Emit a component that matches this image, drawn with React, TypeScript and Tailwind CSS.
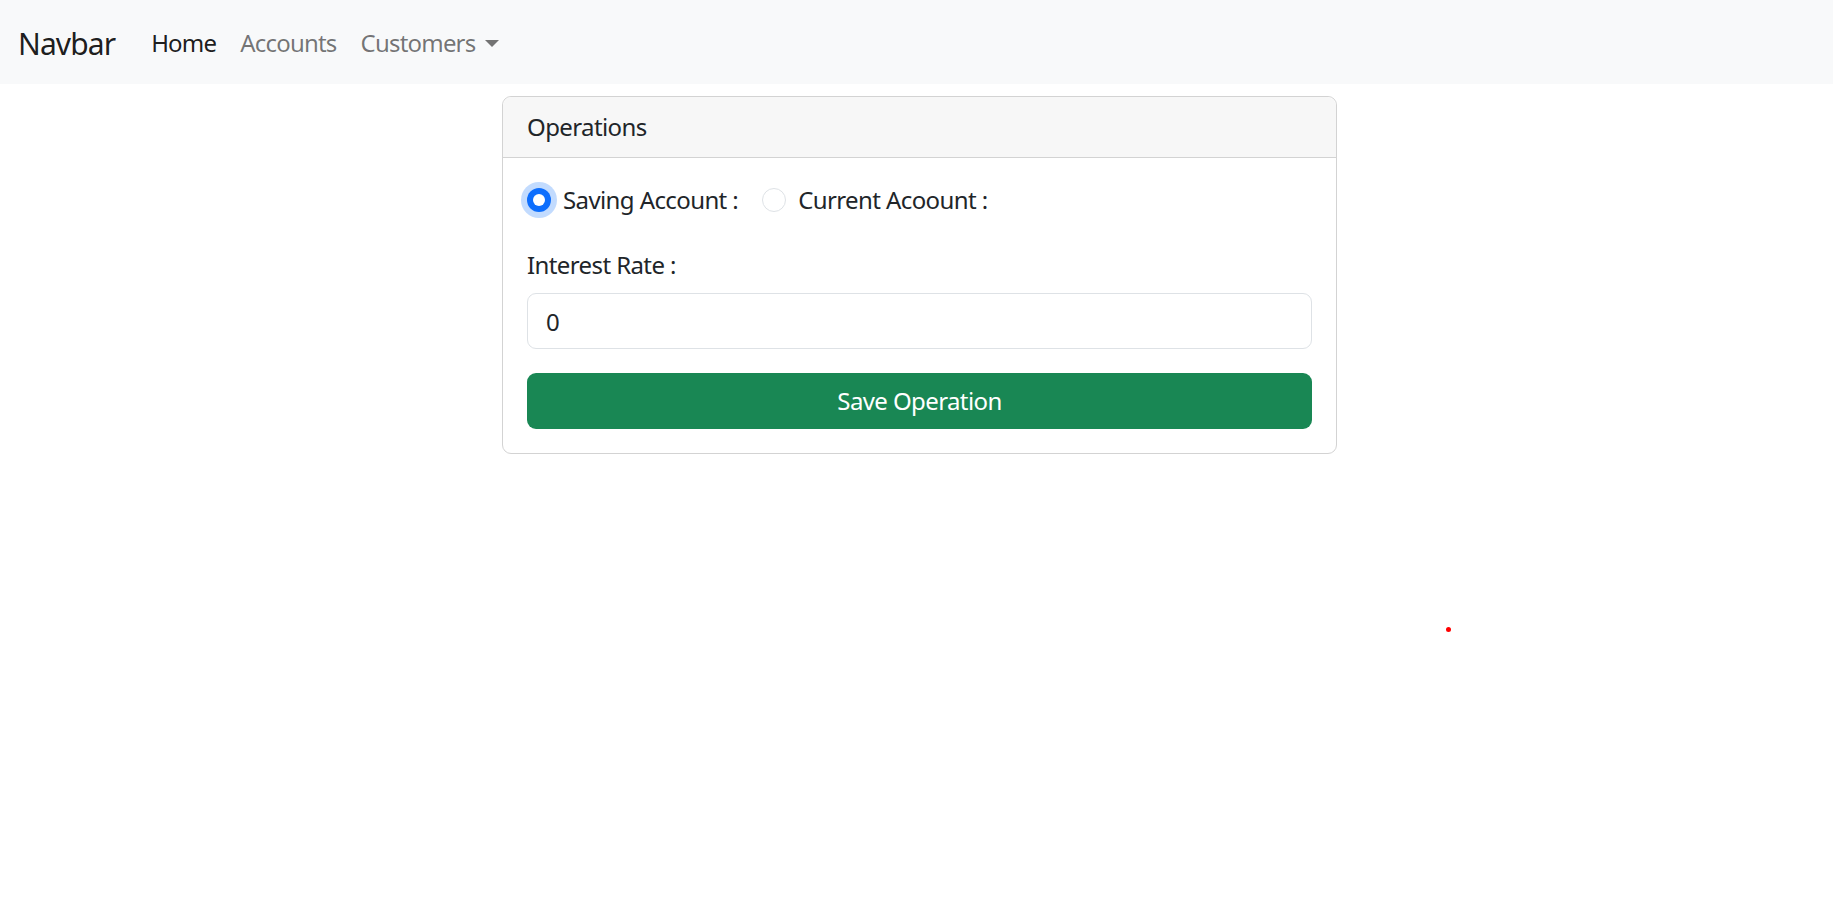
import { useState } from "react"

function Radio({ checked, label, onClick }: { checked: boolean; label: string; onClick: () => void }) {
  return (
    <label className="flex items-center mr-[24px] cursor-pointer" onClick={onClick}>
      {checked ? (
        <span className="w-[24px] h-[24px] rounded-full bg-[#0d6efd] flex items-center justify-center shadow-[0_0_0_6px_rgba(13,110,253,0.25)]">
          <span className="w-[12px] h-[12px] rounded-full bg-white" />
        </span>
      ) : (
        <span className="w-[24px] h-[24px] rounded-full border border-[#dee2e6] bg-white" />
      )}
      <span className="ml-[12px]">{label}</span>
    </label>
  )
}

export default function App() {
  const [type, setType] = useState("saving")
  const [rate, setRate] = useState("0")

  return (
    <div className="relative min-h-screen bg-white text-[#212529] text-[24px] leading-[36px] tracking-[-0.6px] font-['Segoe_UI','Noto_Sans',sans-serif]">
      {/* Navbar */}
      <nav className="h-[84px] bg-[#f8f9fa] flex items-center px-[18px] pt-[2px]">
        <span className="text-[30px] leading-[45px] tracking-[-0.9px] text-black/90 mr-[24px]">Navbar</span>
        <a className="px-[12px] tracking-[-0.8px] text-black/90">Home</a>
        <a className="px-[12px] tracking-[-0.8px] text-black/55">Accounts</a>
        <a className="px-[12px] tracking-[-0.8px] text-black/55 flex items-center">
          Customers
          <span className="ml-[10px] mt-[1px] w-0 h-0 border-t-[7px] border-t-[#737373] border-x-[7px] border-x-transparent" />
        </a>
      </nav>

      <div className="flex justify-center pl-[6px] mt-[12px]">
        <div className="w-[835px] border border-[#d3d3d3] rounded-[9px]">
          <div className="px-[24px] py-[12px] bg-[#f7f7f7] border-b border-[#d3d3d3] rounded-t-[9px]">Operations</div>
          <div className="p-[24px]">
            <div className="flex items-center h-[36px] mb-[29px]">
              <Radio checked={type === "saving"} label="Saving Account :" onClick={() => setType("saving")} />
              <Radio checked={type === "current"} label="Current Acoount :" onClick={() => setType("current")} />
            </div>
            <label className="block mb-[10px]">Interest Rate :</label>
            <input
              value={rate}
              onChange={(e) => setRate(e.target.value)}
              className="block w-full h-[56px] border border-[#dee2e6] rounded-[9px] px-[18px] mb-[24px] outline-none"
            />
            <button className="w-full h-[56px] bg-[#198754] text-white rounded-[9px]">Save Operation</button>
          </div>
        </div>
      </div>

      <span className="absolute left-[1446px] top-[627px] w-[5px] h-[5px] rounded-full bg-[#f00]" />
    </div>
  )
}
